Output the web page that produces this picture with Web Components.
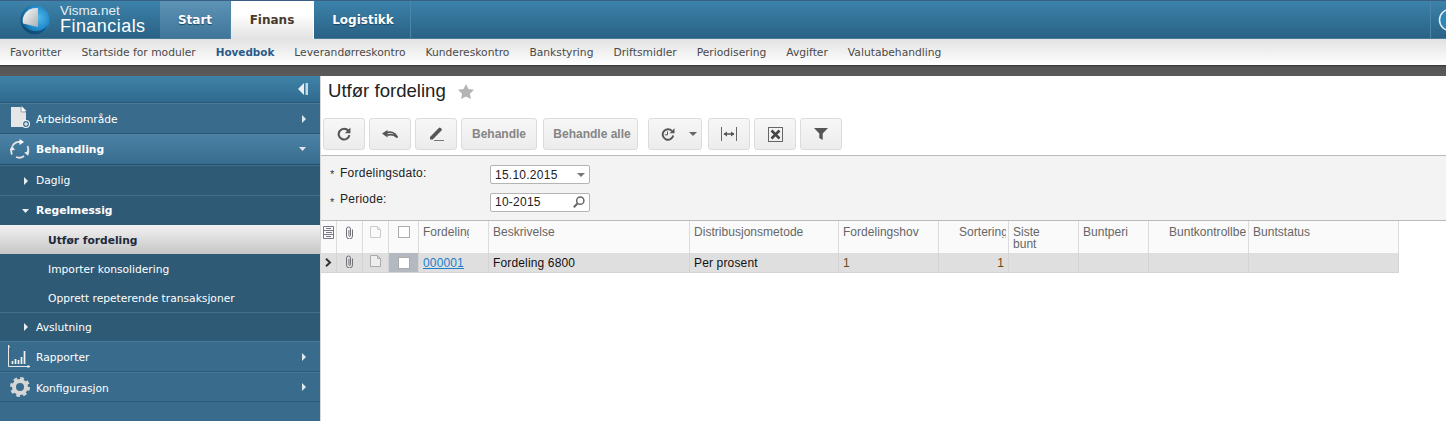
<!DOCTYPE html>
<html lang="nb">
<head>
<meta charset="utf-8">
<title>Utfør fordeling</title>
<style>
html, body { margin: 0; height: 421px; overflow: hidden; background: #fff; }
app-shell { font-family: "Liberation Sans", Arial, sans-serif; }
</style>
</head>
<body>
<app-shell>
    <top-bar slot="top"></top-bar>
    <sub-nav slot="top">
        <nav-link>Favoritter</nav-link>
        <nav-link>Startside for moduler</nav-link>
        <nav-link active>Hovedbok</nav-link>
        <nav-link>Leverandørreskontro</nav-link>
        <nav-link>Kundereskontro</nav-link>
        <nav-link>Bankstyring</nav-link>
        <nav-link>Driftsmidler</nav-link>
        <nav-link>Periodisering</nav-link>
        <nav-link>Avgifter</nav-link>
        <nav-link>Valutabehandling</nav-link>
    </sub-nav>
    <side-bar slot="side">
        <side-item kind="group" arrow="right">
            <svg slot="icon" width="22" height="23" viewBox="0 0 22 23" style="margin:-2px 0 0 2px"><path d="M0 1h10l5 5v15H0z" fill="#e6e6e6"/><path d="M10.500 0l5 5h-5z" fill="#fff"/><path d="M10 1v5h5" fill="none" stroke="#7d97a8" stroke-width=".8"/><circle cx="15" cy="18" r="3.500" fill="#3a6e8e" stroke="#f4f4f4" stroke-width="1.100"/><path d="M15 16v4M13 18h4" stroke="#fff" stroke-width="1.100"/></svg>
            Arbeidsområde
        </side-item>
        <side-item kind="open" arrow="down">
            <svg slot="icon" width="20" height="21" viewBox="0 0 20 21" fill="none" stroke="#e4e4e4" stroke-width="1.800" style="margin-left:1px"><path d="M2.500 7A8 8 0 0 1 10 3"/><path d="M9.500 0l4.500 3-4.500 3z" fill="#fff" stroke="none"/><path d="M17.500 7a8 8 0 0 1 .3 6"/><path d="M19.500 11.500l-1.300 5.300-4-3z" fill="#e8e8e8" stroke="none"/><path d="M14 17a8 8 0 0 1-8 1"/><path d="M2 15.500a8 8 0 0 1-.5-5.500"/><path d="M-.5 11.500L2 6.500l3 4.500z" fill="#e8e8e8" stroke="none"/></svg>
            Behandling
        </side-item>
        <side-item kind="sub" arrow="left-right">Daglig</side-item>
        <side-item kind="sub-open" arrow="left-down">Regelmessig</side-item>
        <side-item kind="selected">Utfør fordeling</side-item>
        <side-item kind="leaf">Importer konsolidering</side-item>
        <side-item kind="leaf">Opprett repeterende transaksjoner</side-item>
        <side-item kind="sub" arrow="left-right" style="height:29px">Avslutning</side-item>
        <side-item kind="group" arrow="right">
            <svg slot="icon" width="23" height="24" viewBox="0 0 23 24" fill="none" stroke="#e8e8e8" style="margin:-1px 0 0 -1px"><path d="M.5 1v21.500H22"/><path d="M.5 1l-1 2.500M.5 1l1 2.500M22 22.500l-2.500-1M22 22.500l-2.500 1"/><path d="M4.500 20v-3M7.500 20v-5M10.500 20v-4M13.500 20v-7M16.500 20V7" stroke-width="1.700" stroke="#f2f2f2"/></svg>
            Rapporter
        </side-item>
        <side-item kind="group" arrow="right" style="height:30px;padding-top:2px">
            <svg slot="icon" width="20" height="20" viewBox="0 0 20 20" fill="none" stroke="#d6d6d6" style="margin-left:1px"><circle cx="10" cy="10" r="6" stroke-width="4"/><circle cx="10" cy="10" r="8.600" stroke-width="2.800" stroke-dasharray="3.600 3.154"/></svg>
            Konfigurasjon
        </side-item>
    </side-bar>
    <page-title slot="main">Utfør fordeling</page-title>
    <tool-bar slot="main"></tool-bar>
    <filter-form slot="main"></filter-form>
    <data-grid slot="main"></data-grid>
</app-shell>

<script>
class AppShell extends HTMLElement {
    constructor() {
        super();
        this.attachShadow({ mode: 'open' });
        this.shadowRoot.innerHTML = `
            <style>
                :host { display: grid; grid-template-rows: 76px 345px; width: 1446px; height: 421px; }
                .top { display: flex; flex-direction: column; min-width: 0; }
                .band { height: 11px; background: linear-gradient(#333 0, #555 2px, #5a5a5a 100%); }
                .body { display: grid; grid-template-columns: 320px 1fr; min-height: 0; }
                .main { border-left: 1px solid #d8d8d8; display: flex; flex-direction: column; min-width: 0; }
            </style>
            <div class="top"><slot name="top"></slot><div class="band"></div></div>
            <div class="body">
                <slot name="side"></slot>
                <div class="main"><slot name="main"></slot></div>
            </div>`;
    }
}

class TopBar extends HTMLElement {
    constructor() {
        super();
        this.attachShadow({ mode: 'open' });
        this.shadowRoot.innerHTML = `
            <style>
                :host {
                    display: flex; height: 39px; box-sizing: border-box;
                    border-top: 1px solid #3a5f85; border-bottom: 1px solid #4c7b99;
                    background: linear-gradient(#3c82aa, #2a6285);
                    color: #fff;
                }
                .logo { width: 160px; display: flex; align-items: center; gap: 10px; padding-left: 20px; box-sizing: border-box; }
                .brand { display: flex; flex-direction: column; font: 13.5px/13px "Liberation Sans", Arial, sans-serif; color: #e6eef3; padding-top: 1px; }
                .brand b { font: normal 18px/19px "Liberation Sans", Arial, sans-serif; letter-spacing: .45px; color: #fff; }
                .tab {
                    display: flex; align-items: center; justify-content: center; box-sizing: border-box;
                    font: bold 12px "DejaVu Sans", Verdana, sans-serif; text-shadow: 0 1px 1px #1c4560;
                    border-right: 1px solid #4d86a8;
                }
                .start { width: 71px; background: linear-gradient(#5d93b5, #3f7699); }
                .finans {
                    width: 83px; margin: 0 0 -1px 0; color: #4a3a2c; text-shadow: none; border-right: 1px solid #fff;
                    background: linear-gradient(#fff 35%, #e2e2e2);
                }
                .logistikk { width: 97px; padding-left: 2px; }
                .fill { flex: 1; }
                .help { width: 16px; box-sizing: border-box; border-left: 1px solid #4d86a8; display: flex; align-items: center; padding-left: 7px; overflow: hidden; }
            </style>
            <div class="logo">
                <svg width="30" height="30" viewBox="0 0 30 30" style="flex:none">
                    <defs>
                        <radialGradient id="g" cx=".62" cy=".42" r=".62"><stop offset="0" stop-color="#52b8ea"/><stop offset=".7" stop-color="#1c86c6"/><stop offset="1" stop-color="#14527f"/></radialGradient>
                        <linearGradient id="w" x1="0" y1="0" x2="1" y2="1"><stop offset="0" stop-color="#fff"/><stop offset="1" stop-color="#a9aeb2"/></linearGradient>
                    </defs>
                    <circle cx="15" cy="15" r="14.500" fill="url(#g)"/>
                    <path d="M3 18.500C1 10 8 2 18 3v19z" fill="url(#w)"/>
                    <path d="M2 19c2 6 7 10 13 10s10-3 13-9c-4 5-8 6-13 6s-9-2-13-7z" fill="#0f4369" opacity=".7"/>
                </svg>
                <div class="brand"><span>Visma.net</span><b>Financials</b></div>
            </div>
            <div class="tab start">Start</div>
            <div class="tab finans">Finans</div>
            <div class="tab logistikk">Logistikk</div>
            <div class="fill"></div>
            <div class="help"><svg width="24" height="24" viewBox="0 0 24 24" style="flex:none"><circle cx="12" cy="12" r="10.500" fill="#2f86b8" stroke="#e8f0f4" stroke-width="1.500"/></svg></div>`;
    }
}

class SubNav extends HTMLElement {
    constructor() {
        super();
        this.attachShadow({ mode: 'open' });
        this.shadowRoot.innerHTML = `
            <style>
                :host {
                    display: flex; height: 26px; align-items: center; padding-left: 10px; gap: 20px;
                    background: linear-gradient(#e2e2e2, #fff);
                }
            </style>
            <slot></slot>`;
    }
}

class NavLink extends HTMLElement {
    constructor() {
        super();
        this.attachShadow({ mode: 'open' });
        this.shadowRoot.innerHTML = `
            <style>
                :host { display: block; font: 10.72px "DejaVu Sans", Verdana, sans-serif; color: #4a4a4a; white-space: nowrap; }
                :host([active]) { font-weight: bold; font-size: 10.4px; color: #2a5a8a; }
            </style>
            <slot></slot>`;
    }
}

class SideBar extends HTMLElement {
    constructor() {
        super();
        this.attachShadow({ mode: 'open' });
        this.shadowRoot.innerHTML = `
            <style>
                :host { display: flex; flex-direction: column; background: #396c8c; min-height: 0; }
                .head {
                    height: 26px; display: flex; align-items: center; justify-content: flex-end; padding-right: 12px;
                    background: linear-gradient(#4082a8, #2f6a8e); border-bottom: 1px solid #2b5a78;
                }
            </style>
            <div class="head"><svg width="10" height="12" viewBox="0 0 10 12"><path d="M6 0v12L0 6z" fill="#e8eef2"/><path d="M7.500 0H10v12H7.500z" fill="#c9d6de"/></svg></div>
            <slot></slot>`;
    }
}

class SideItem extends HTMLElement {
    constructor() {
        super();
        this.attachShadow({ mode: 'open' });
        const arrows = {
            'right': '<svg class="ar" width="4" height="8" viewBox="0 0 4 8" style="right:14px"><path d="M0 0l4 4-4 4z" fill="#dfe7ec"/></svg>',
            'down': '<svg class="ar" width="7" height="4" viewBox="0 0 7 4" style="right:14px"><path d="M0 0h7L3.500 4z" fill="#dfe7ec"/></svg>',
            'left-right': '<svg class="ar" width="4" height="8" viewBox="0 0 4 8" style="left:24px"><path d="M0 0l4 4-4 4z" fill="#e8eef2"/></svg>',
            'left-down': '<svg class="ar" width="7" height="4" viewBox="0 0 7 4" style="left:22px"><path d="M0 0h7L3.500 4z" fill="#e8eef2"/></svg>'
        };
        this.shadowRoot.innerHTML = `
            <style>
                :host {
                    display: flex; align-items: center; position: relative; box-sizing: border-box; height: 29px;
                    padding-left: 36px; color: #fff; white-space: nowrap;
                    font: 10.7px "DejaVu Sans", Verdana, sans-serif;
                }
                :host([kind="group"]) { height: 31px; padding-top: 1px; background: #396c8c; border-top: 1px solid #46799a; border-bottom: 1px solid #2b5a78; }
                :host([kind="open"]) { height: 31px; padding-top: 1px; font-weight: bold; background: linear-gradient(#4b82a5, #386c8e); border-bottom: 1px solid #25506c; }
                :host([kind="sub"]), :host([kind="sub-open"]), :host([kind="leaf"]) { background: #2e5a76; }
                :host([kind="sub"]), :host([kind="sub-open"]) { border-top: 1px solid #3f7090; height: 30px; }
                :host([kind="sub-open"]) { font-weight: bold; }
                :host([kind="selected"]) { padding: 1px 0 0 48px; font-weight: bold; color: #1c2a3c; background: linear-gradient(#f2f2f2, #c6c6c6); }
                :host([kind="leaf"]) { padding: 1px 0 0 48px; }
                .ic { position: absolute; left: 9px; top: 0; bottom: 0; display: flex; align-items: center; }
                .ar { position: absolute; top: 50%; transform: translateY(-50%); }
            </style>
            <span class="ic"><slot name="icon"></slot></span>
            <slot></slot>
            ${arrows[this.getAttribute('arrow')] || ''}`;
    }
}

class PageTitle extends HTMLElement {
    constructor() {
        super();
        this.attachShadow({ mode: 'open' });
        this.shadowRoot.innerHTML = `
            <style>
                :host { display: flex; align-items: center; gap: 12px; height: 30px; padding: 0 0 12px 7px; font: 18.6px "Liberation Sans", Arial, sans-serif; color: #222; }
            </style>
            <slot></slot>
            <svg width="16" height="15" viewBox="0 0 17 16"><path d="M8.500 0l2.600 5.400 5.900.8-4.300 4.100 1.100 5.700-5.300-2.800-5.300 2.800 1.100-5.700L0 6.200l5.900-.8z" fill="#b4b4b4"/></svg>`;
    }
}

class ToolBtn extends HTMLElement {
    constructor() {
        super();
        this.attachShadow({ mode: 'open' });
        this.shadowRoot.innerHTML = `
            <style>
                :host {
                    display: flex; align-items: center; justify-content: center; box-sizing: border-box; height: 32px;
                    width: var(--w, 42px); border: 1px solid #dcdcdc; border-radius: 3px;
                    background: linear-gradient(#f7f7f7, #ececec);
                    font: bold 12px "Liberation Sans", Arial, sans-serif; color: #858585;
                }
            </style>
            <slot></slot>`;
    }
}

class ToolBar extends HTMLElement {
    constructor() {
        super();
        this.attachShadow({ mode: 'open' });
        this.shadowRoot.innerHTML = `
            <style>
                :host { display: flex; gap: 4px; padding: 0 0 5px 2px; }
                .wide { margin-left: 2px; padding-left: 3px; }
                .hist { margin-left: 6px; padding-left: 8px; }
                .ten { margin-left: 2px; }
            </style>
            <tool-btn><svg width="14" height="14" viewBox="0 0 13 13" fill="none"><path d="M10.500 3.500A5 5 0 1 0 11.500 7.500" stroke="#555" stroke-width="2"/><path d="M12.500 .5v5.200H7.300z" fill="#555"/></svg></tool-btn>
            <tool-btn><svg width="16" height="8" viewBox="0 0 16 8" fill="none"><path d="M4 2.800c4-1.300 9-.8 11.300 4.700-3-2.800-7-3.300-10-2.400" stroke="#555" stroke-width="1.800"/><path d="M0 3.500L5.500 0v7.500z" fill="#555"/></svg></tool-btn>
            <tool-btn><svg width="15" height="14" viewBox="0 0 15 14"><path d="M1 10L9.800.9a1.300 1.300 0 0 1 1.800 0l.9.9a1.300 1.300 0 0 1 0 1.800L3.700 12.500H1z" fill="#555"/><path d="M5 13.500h10" stroke="#777"/></svg></tool-btn>
            <tool-btn style="--w:76px">Behandle</tool-btn>
            <tool-btn class="wide" style="--w:95px">Behandle alle</tool-btn>
            <tool-btn class="hist" style="--w:54px"><svg width="14" height="13" viewBox="0 0 14 13" fill="none" style="margin-right:14px"><path d="M11 3a5.300 5.300 0 1 0 1.200 4.500" stroke="#555" stroke-width="1.900"/><path d="M13.500 .3v5H8.500z" fill="#555"/><path d="M6.500 3.500v3.300H3.800" stroke="#555"/></svg><svg width="8" height="4" viewBox="0 0 8 4"><path d="M0 0h8L4 4z" fill="#666"/></svg></tool-btn>
            <tool-btn class="ten"><svg width="16" height="14" viewBox="0 0 16 14" fill="none"><path d="M.5 0v14M15.500 0v14" stroke="#666"/><path d="M3 7h10" stroke="#555" stroke-width="1.500"/><path d="M2.500 7L6 4.500v5zM13.500 7L10 4.500v5z" fill="#555"/></svg></tool-btn>
            <tool-btn><svg width="15" height="15" viewBox="0 0 15 15" fill="none"><rect x=".5" y=".5" width="14" height="14" stroke="#666"/><path d="M3.500 3.500l8 8M11.500 3.500l-8 8" stroke="#444" stroke-width="2.500"/></svg></tool-btn>
            <tool-btn><svg width="14" height="12" viewBox="0 0 14 12"><path d="M0 0h14L8.700 5.500V12L5.300 10V5.500z" fill="#555"/></svg></tool-btn>`;
    }
}

class FilterField extends HTMLElement {
    constructor() {
        super();
        this.attachShadow({ mode: 'open' });
        const icon = this.getAttribute('icon') === 'search'
            ? '<svg width="12" height="12" viewBox="0 0 12 12" fill="none"><circle cx="7.300" cy="4.700" r="3.600" stroke="#666" stroke-width="1.500"/><path d="M4.500 7.500L.8 11.200" stroke="#666" stroke-width="2"/></svg>'
            : '<svg width="8" height="4" viewBox="0 0 8 4"><path d="M0 0h8L4 4z" fill="#777"/></svg>';
        this.shadowRoot.innerHTML = `
            <style>
                :host { display: grid; grid-template-columns: 10px 150px 100px; align-items: center; color: #222; font: 12px "Liberation Sans", Arial, sans-serif; height: 19px; letter-spacing: .25px; }
                .req { font-size: 11px; color: #333; padding-bottom: 1px; }
                .label { padding-bottom: var(--lift, 4px); }
                .box {
                    display: flex; align-items: center; justify-content: space-between; box-sizing: border-box; height: 19px;
                    background: #fff; border: 1px solid #b4b4b4; border-radius: 2px; padding: 0 4px 0 4px;
                }
            </style>
            <span class="req">*</span>
            <span class="label" part="label"><slot></slot></span>
            <div class="box"><span>${this.getAttribute('value')}</span>${icon}</div>`;
    }
}

class FilterForm extends HTMLElement {
    constructor() {
        super();
        this.attachShadow({ mode: 'open' });
        this.shadowRoot.innerHTML = `
            <style>
                :host {
                    display: flex; flex-direction: column; gap: 8px; box-sizing: border-box; height: 66px; padding: 9px 0 0 9px;
                    background: #f3f3f3; border-top: 1px solid #bbb; border-bottom: 1px solid #bbb;
                }
            </style>
            <filter-field value="15.10.2015">Fordelingsdato:</filter-field>
            <filter-field value="10-2015" icon="search" style="--lift:6px">Periode:</filter-field>`;
    }
}

class DataGrid extends HTMLElement {
    constructor() {
        super();
        this.attachShadow({ mode: 'open' });
        const clip = '<svg width="9" height="13" viewBox="0 0 9 13" fill="none"><path d="M7.500 3.500V10a3 3 0 0 1-6 0V3a2 2 0 0 1 4 0v6.500a.8.8 0 0 1-1.600 0V4" stroke="#707078" stroke-width="1"/></svg>';
        const note = (c, f) => `<svg width="11" height="12" viewBox="0 0 11 12"><path d="M.5.500h7l3 3v8H.5z" fill="${f}" stroke="${c}"/><path d="M7.500.5v3h3" fill="none" stroke="${c}"/></svg>`;
        const check = '<span class="chk"></span>';
        const heads = [
            ['<svg width="12" height="13" viewBox="0 0 12 13" fill="none" stroke="#778"><path d="M.5.500h10v12H.5z"/><path d="M.5 4.500h10M.5 8.500h10M3 2.500h5M3 6.500h6M3 10.500h5"/></svg>', 'ic'],
            [clip, 'ic'], [note('#ccc', '#fafafa'), 'ic'], [check, 'ic'],
            ['Fordeling', 'cut'], ['Beskrivelse', ''], ['Distribusjonsmetode', ''], ['Fordelingshov', ''],
            ['Sortering', 'sort'], ['Siste<br>bunt', ''], ['Buntperi', ''], ['Buntkontrollbeløp', 'sort'], ['Buntstatus', '']
        ];
        const row = [
            ['<svg width="7" height="9" viewBox="0 0 7 9" fill="none"><path d="M1 .8L5 4.500 1 8.200" stroke="#333" stroke-width="2"/></svg>', 'ic'],
            [clip, 'ic'], [note('#aaa', '#eee'), 'ic'], [check, 'ic sel'],
            ['<a>000001</a>', ''], ['Fordeling 6800', ''], ['Per prosent', ''], ['1', 'o'], ['1', 'r o'], ['', ''], ['', ''], ['', ''], ['', '']
        ];
        const cells = (list, cls) => list.map(([c, k]) => `<div class="${cls} ${k}"><span>${c}</span></div>`).join('');
        this.shadowRoot.innerHTML = `
            <style>
                :host { display: block; font: 12px "Liberation Sans", Arial, sans-serif; letter-spacing: .15px; }
                .grid {
                    display: grid; width: 1078px;
                    grid-template-columns: 16px 26px 26px 30px 70px 201px 149px 100px 70px 70px 70px 100px 150px;
                    grid-template-rows: 32px 19px;
                    border-bottom: 1px solid #d4d4d4;
                }
                .h, .c { border-right: 1px solid #dcdcdc; box-sizing: border-box; overflow: hidden; white-space: nowrap; padding: 0 4px; display: flex; min-width: 0; }
                .h { background: #fafafa; color: #666; padding-top: 5px; line-height: 12px; align-items: flex-start; letter-spacing: .03px; }
                .c { background: #dfdfdf; color: #111; align-items: center; border-right-color: #d4d4d4; }
                .ic { justify-content: center; padding: 5px 0 0; }
                .c.ic { padding: 0; }
                .r { justify-content: flex-end; }
                .o { color: #6b4a10; }
                .sel { background: #b4b8c0; }
                .cut span { width: 46px; overflow: hidden; }
                .sort { padding: 5px 2px 0 20px; }
                .sort span { width: 100%; overflow: hidden; }
                .chk { display: block; width: 12px; height: 12px; box-sizing: border-box; border: 1px solid #aaa; background: #fff; }
                a { color: #1a80cc; text-decoration: underline; }
                .h span, .c span { display: block; }
            </style>
            <div class="grid">${cells(heads, 'h')}${cells(row, 'c')}</div>`;
    }
}

customElements.define('app-shell', AppShell);
customElements.define('top-bar', TopBar);
customElements.define('sub-nav', SubNav);
customElements.define('nav-link', NavLink);
customElements.define('side-bar', SideBar);
customElements.define('side-item', SideItem);
customElements.define('page-title', PageTitle);
customElements.define('tool-btn', ToolBtn);
customElements.define('tool-bar', ToolBar);
customElements.define('filter-field', FilterField);
customElements.define('filter-form', FilterForm);
customElements.define('data-grid', DataGrid);
</script>
</body>
</html>
